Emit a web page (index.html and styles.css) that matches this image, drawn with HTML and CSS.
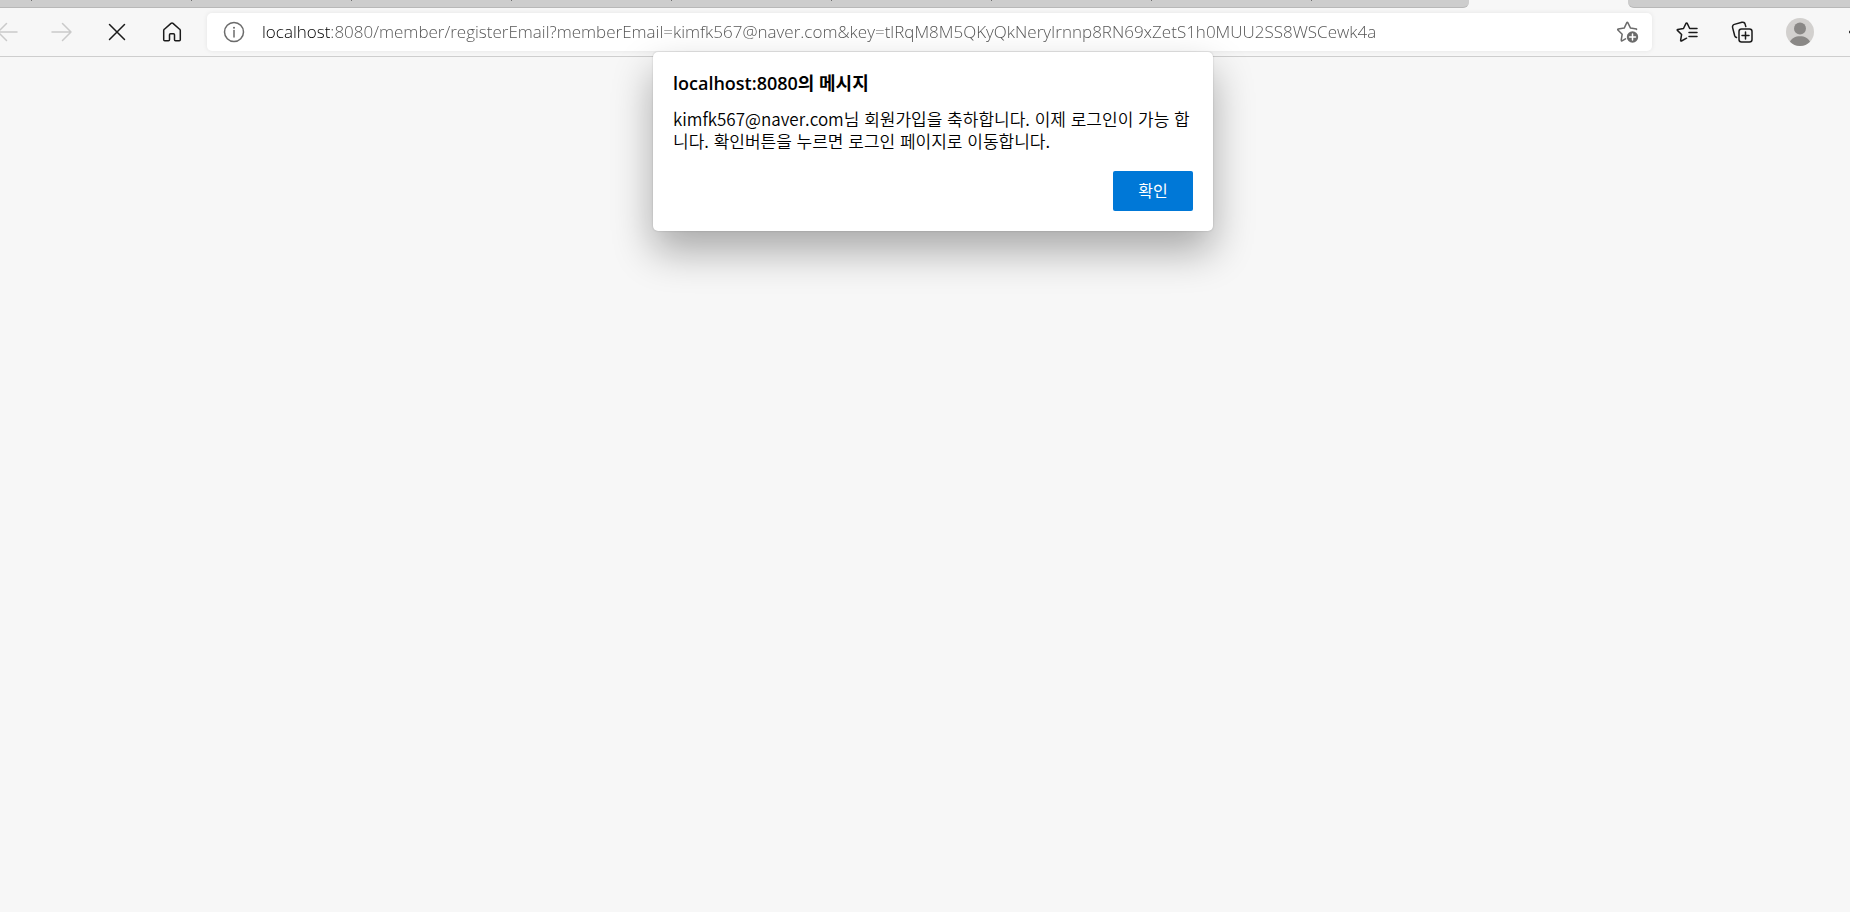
FILE: index.html
```html
<!DOCTYPE html>
<html lang="ko">
<head>
   <meta charset="UTF-8">
   <meta name="viewport" content="width=device-width, initial-scale=1.0">
   <title>localhost:8080</title>
   <link rel="stylesheet" href="styles.css">
</head>
<body>
   <div id="tab-strip">
      <div class="tabs-left">
         <span class="tab"></span><span class="tab"></span><span class="tab"></span>
         <span class="tab"></span><span class="tab"></span><span class="tab"></span>
         <span class="tab"></span><span class="tab"></span><span class="tab"></span>
      </div>
      <div class="tab-active"></div>
      <div class="tabs-right"></div>
   </div>
   <header id="toolbar">
      <button class="tool-btn" aria-label="뒤로" disabled>
         <svg width="22" height="20" viewBox="0 0 22 20"><path d="M21 10H2M10.500 1.500L2 10l8.500 8.500"/></svg>
      </button>
      <button class="tool-btn" aria-label="앞으로" disabled>
         <svg width="22" height="20" viewBox="0 0 22 20"><path d="M1 10h19M11.500 1.500L20 10l-8.500 8.500"/></svg>
      </button>
      <button class="tool-btn" aria-label="중지">
         <svg width="20" height="20" viewBox="0 0 20 20"><path d="M2.500 2.500l15 15M17.500 2.500l-15 15"/></svg>
      </button>
      <button class="tool-btn" aria-label="홈">
         <svg width="20" height="20" viewBox="0 0 20 20"><path d="M1.700 8.600c0-.6.200-1 .7-1.400L9 1.400c.6-.5 1.400-.5 2 0l6.600 5.800c.5.400.7.800.7 1.400v9.100c0 .6-.4 1-1 1h-3.800c-.6 0-1-.4-1-1v-5c0-.6-.4-1-1-1h-3c-.6 0-1 .4-1 1v5c0 .6-.4 1-1 1H2.700c-.6 0-1-.4-1-1z"/></svg>
      </button>
      <div id="address-bar">
         <button class="bar-btn" aria-label="사이트 정보 보기">
            <svg width="22" height="22" viewBox="0 0 22 22"><circle cx="11" cy="11" r="9.500"/><path d="M11 9.500v6.500"/><circle class="fill" cx="11" cy="6.700" r="1"/></svg>
         </button>
         <input id="url" type="text" aria-label="주소창" spellcheck="false" value="localhost:8080/member/registerEmail?memberEmail=kimfk567@naver.com&amp;key=tlRqM8M5QKyQkNeryIrnnp8RN69xZetS1h0MUU2SS8WSCewk4a">
         <button class="bar-btn" aria-label="즐겨찾기에 추가">
            <svg width="24" height="24" viewBox="0 0 24 24"><path d="M20.500 9.500V9l-6-.9-2.700-5.500c-.2-.4-.8-.4-1 0L8.200 8.100l-6 .9c-.5.100-.7.600-.3 1l4.300 4.200-1 6c-.1.500.4.800.8.600l3.500-2"/><circle class="fill" cx="16.500" cy="17" r="5.700"/><path class="plus" d="M16.500 14v6M13.500 17h6"/></svg>
         </button>
      </div>
      <button class="tool-btn" aria-label="즐겨찾기">
         <svg width="24" height="22" viewBox="0 0 24 22"><path d="M22 7.500h-7.300l-2.600-5.300c-.2-.4-.8-.4-1 0L8.500 7.500l-5.800.9c-.5.100-.7.600-.3 1l4.200 4.100-1 5.900c-.1.500.4.800.8.600l5.200-2.800M14 11.500h8M14 15.500h8"/></svg>
      </button>
      <button class="tool-btn" aria-label="컬렉션">
         <svg width="22" height="22" viewBox="0 0 22 22"><rect x="8" y="8" width="13" height="13" rx="2.500"/><path d="M14.500 11v7M11 14.500h7M5.500 16.500c-1-.3-1.500-.9-1.800-1.800L1.600 6.600c-.4-1.400.4-2.800 1.800-3.200l7.500-2.100c1.400-.4 2.800.4 3.200 1.800l.7 2.500"/></svg>
      </button>
      <button class="tool-btn profile" aria-label="프로필">
         <svg width="28" height="28" viewBox="0 0 28 28"><circle class="face-bg" cx="14" cy="14" r="14"/><circle class="face" cx="14" cy="10.500" r="6"/><path class="face" d="M4 23.800c1.500-3.600 5.300-5.600 10-5.600s8.500 2 10 5.600A14 14 0 0 1 14 28a14 14 0 0 1-10-4.200z"/></svg>
      </button>
      <button class="tool-btn" aria-label="설정 및 기타">
         <svg width="20" height="20" viewBox="0 0 20 20"><circle class="fill" cx="2.500" cy="10" r="1.500"/><circle class="fill" cx="10" cy="10" r="1.500"/><circle class="fill" cx="17.500" cy="10" r="1.500"/></svg>
      </button>
   </header>
   <main id="page"></main>
   <dialog id="alert" open aria-labelledby="alert-title">
      <h1 id="alert-title">localhost:8080의 메시지</h1>
      <p>kimfk567@naver.com님 회원가입을 축하합니다. 이제 로그인이 가능 합니다. 확인버튼을 누르면 로그인 페이지로 이동합니다.</p>
      <form method="dialog">
         <button id="ok-btn">확인</button>
      </form>
   </dialog>
</body>
</html>
```
FILE: styles.css
```css
:root {
   --page-bg: #f7f7f7;
   --strip-bg: #cdcdcd;
   --accent: #0078d7;
   --icon: #1b1b1b;
   --icon-muted: #6b6b6b;
   --url-muted: #505050;
   --ui-font: "Open Sans", "Noto Sans CJK KR", sans-serif;
}
* {
   box-sizing: border-box;
}
html {
   height: 100%;
}
body {
   display: flex;
   flex-direction: column;
   height: 100%;
   margin: 0;
   overflow: hidden;
   background: var(--page-bg);
   font-family: "Noto Sans CJK KR", sans-serif;
}
button {
   padding: 0;
   border: none;
   background: none;
   font-family: inherit;
}
svg {
   display: block;
   flex: none;
   fill: none;
   stroke: var(--icon);
   stroke-width: 1.5;
   stroke-linecap: round;
   stroke-linejoin: round;
}
/* Tabs */
#tab-strip {
   display: flex;
   flex: none;
   height: 8px;
}
.tabs-left, .tabs-right {
   background: var(--strip-bg);
   border-bottom: 1px solid #b8b8b8;
}
.tabs-left {
   display: flex;
   width: 1469px;
   padding-left: 31px;
   border-bottom-right-radius: 6px;
}
.tab {
   flex: none;
   width: 160px;
   height: 1px;
   border-left: 1px solid #707070;
}
.tab-active {
   flex: none;
   width: 159px;
}
.tabs-right {
   flex: 1;
   border-bottom-left-radius: 6px;
}
/* Toolbar */
#toolbar {
   display: flex;
   flex: none;
   align-items: center;
   gap: 15px;
   height: 49px;
   margin: 0 -28px 0 -13px;
   padding-bottom: 1px;
   border-bottom: 1px solid #cecece;
}
.tool-btn {
   display: flex;
   flex: none;
   align-items: center;
   justify-content: center;
   width: 40px;
   height: 38px;
}
.tool-btn:disabled svg {
   stroke: #cacaca;
}
.profile {
   width: 46px;
}
#address-bar {
   display: flex;
   flex: 1;
   align-items: center;
   height: 38px;
   padding: 0 12px 0 16px;
   border-radius: 5px;
   background: #fff;
   box-shadow: 0 0 5px rgba(0, 0, 0, 0.08);
}
.bar-btn svg {
   stroke: var(--icon-muted);
}
#url {
   flex: 1;
   height: 30px;
   margin-left: 17px;
   padding: 0;
   border: none;
   outline: none;
   /* host is dark, the rest of the address is muted */
   background: linear-gradient(to right, #000 69px, var(--url-muted) 69px);
   -webkit-background-clip: text;
   background-clip: text;
   color: transparent;
   font-family: var(--ui-font);
   font-size: 17px;
   font-weight: 300;
}
.fill {
   fill: var(--icon);
   stroke: none;
}
.bar-btn .fill {
   fill: var(--icon-muted);
}
.plus {
   stroke: #fff;
}
.face-bg {
   fill: #d2d0ce;
   stroke: none;
}
.face {
   fill: #8a8886;
   stroke: none;
}
#page {
   flex: 1;
}
/* Alert */
#alert {
   position: absolute;
   top: 52px;
   left: 16px;
   right: 0;
   width: 560px;
   margin: 0 auto;
   padding: 20px;
   border: none;
   border-radius: 5px;
   background: #fff;
   color: #000;
   box-shadow: 0 0 2px rgba(0, 0, 0, 0.2), 0 20px 40px rgba(0, 0, 0, 0.32);
}
#alert h1 {
   margin: 0;
   font-family: var(--ui-font);
   font-size: 18px;
   font-weight: 600;
   line-height: 22px;
}
#alert p {
   margin: 14px 0 19px;
   font-size: 17px;
   font-weight: 350;
   line-height: 22px;
}
#alert form {
   display: flex;
   justify-content: flex-end;
}
#ok-btn {
   width: 80px;
   height: 40px;
   padding-bottom: 2px;
   border-radius: 2px;
   background: var(--accent);
   color: #fff;
   font-size: 16px;
}
#ok-btn:hover {
   background: #006cc1;
}
```
